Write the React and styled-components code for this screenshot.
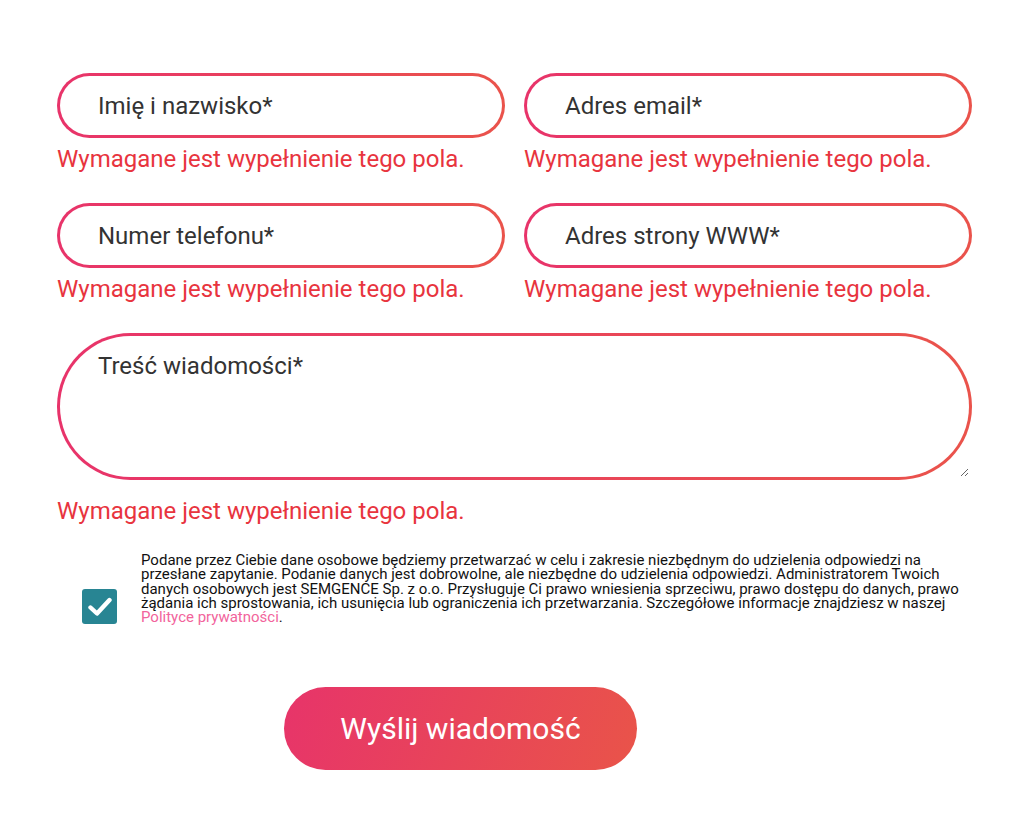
import React, {useState} from 'react';
import styled, {createGlobalStyle} from 'styled-components';

const GlobalStyle = createGlobalStyle`
	html, body {
		margin: 0;
		padding: 0;
		background: #fff;
		font-family: Roboto, 'Noto Sans', sans-serif;
	}
`;

const fields = [
	{name: 'name', label: 'Imię i nazwisko*'},
	{name: 'email', label: 'Adres email*'},
	{name: 'phone', label: 'Numer telefonu*'},
	{name: 'www', label: 'Adres strony WWW*'},
];

const ERROR = 'Wymagane jest wypełnienie tego pola.';

const App = () => {
	const [agree, setAgree] = useState(true);

	return (
		<>
			<GlobalStyle />
			<Form onSubmit={(e) => e.preventDefault()}>
				<Grid>
					{fields.map((f) => (
						<Field key={f.name}>
							<Input type="text" name={f.name} placeholder={f.label} />
							<Error>{ERROR}</Error>
						</Field>
					))}
				</Grid>
				<Field>
					<TextArea name="message" placeholder="Treść wiadomości*" />
					<Error $wide>{ERROR}</Error>
				</Field>
				<Consent>
					<CheckBox type="button" onClick={() => setAgree((v) => !v)} $checked={agree}>
						{agree && (
							<svg width="24" height="20" viewBox="0 0 24 20">
								<path d="M2.5 10.5 L9 16.5 L21.5 3" fill="none" stroke="#fff" strokeWidth="4.4" strokeLinecap="round" strokeLinejoin="round" />
							</svg>
						)}
					</CheckBox>
					<ConsentText>
						Podane przez Ciebie dane osobowe będziemy przetwarzać w celu i zakresie niezbędnym do udzielenia odpowiedzi na przesłane zapytanie. Podanie danych jest dobrowolne, ale niezbędne do udzielenia odpowiedzi. Administratorem Twoich danych osobowych jest SEMGENCE Sp. z o.o. Przysługuje Ci prawo wniesienia sprzeciwu, prawo dostępu do danych, prawo żądania ich sprostowania, ich usunięcia lub ograniczenia ich przetwarzania. Szczegółowe informacje znajdziesz w naszej <a href="#polityka">Polityce prywatności</a>.
					</ConsentText>
				</Consent>
				<SubmitButton type="submit">Wyślij wiadomość</SubmitButton>
			</Form>
		</>
	);
};

export default App;

const gradientBorder = `
	border: 3px solid transparent;
	background: linear-gradient(#fff, #fff) padding-box,
		linear-gradient(90deg, #e8336a, #ea534b) border-box;
`;

const Form = styled.form`
	width: 915px;
	padding: 73px 0 40px 57px;
	display: flex;
	flex-direction: column;
`;

const Grid = styled.div`
	display: grid;
	grid-template-columns: 448px 448px;
	column-gap: 19px;
`;

const Field = styled.div`
	display: flex;
	flex-direction: column;
`;

const Input = styled.input`
	box-sizing: border-box;
	height: 65px;
	width: 100%;
	${gradientBorder}
	border-radius: 40px;
	padding: 0 20px 0 38px;
	font-family: Roboto, sans-serif;
	font-size: 24px;
	color: #333;
	outline: none;
	&::placeholder {
		color: #333;
		opacity: 1;
	}
`;

const TextArea = styled.textarea`
	box-sizing: border-box;
	height: 147px;
	width: 100%;
	${gradientBorder}
	border-radius: 100px;
	padding: 16px 30px 10px 38px;
	font-family: Roboto, sans-serif;
	font-size: 24px;
	color: #333;
	outline: none;
	&::placeholder {
		color: #333;
		opacity: 1;
	}
`;

const Error = styled.div`
	margin: ${(p) => (p.$wide ? '18px 0 0' : '8px 0 0')};
	height: ${(p) => (p.$wide ? '26px' : '57px')};
	font-size: 24px;
	line-height: 26px;
	color: #e8343e;
	white-space: nowrap;
`;

const Consent = styled.div`
	display: flex;
	align-items: flex-start;
	margin-top: 29px;
`;

const CheckBox = styled.button`
	flex: none;
	width: 35px;
	height: 35px;
	margin: 36px 24px 0 25px;
	padding: 0;
	border: none;
	border-radius: 3px;
	background: ${(p) => (p.$checked ? '#288593' : '#fff')};
	display: flex;
	align-items: center;
	justify-content: center;
	cursor: pointer;
`;

const ConsentText = styled.p`
	margin: 0;
	font-size: 15px;
	line-height: 14.3px;
	color: #111;
	a {
		color: #f2649c;
		text-decoration: none;
	}
`;

const SubmitButton = styled.button`
	align-self: flex-start;
	margin: 63px 0 0 227px;
	width: 353px;
	height: 83px;
	border: none;
	border-radius: 42px;
	background: linear-gradient(110deg, #e7346a, #e95449);
	color: #fff;
	font-family: Roboto, sans-serif;
	font-size: 30px;
	cursor: pointer;
`;
